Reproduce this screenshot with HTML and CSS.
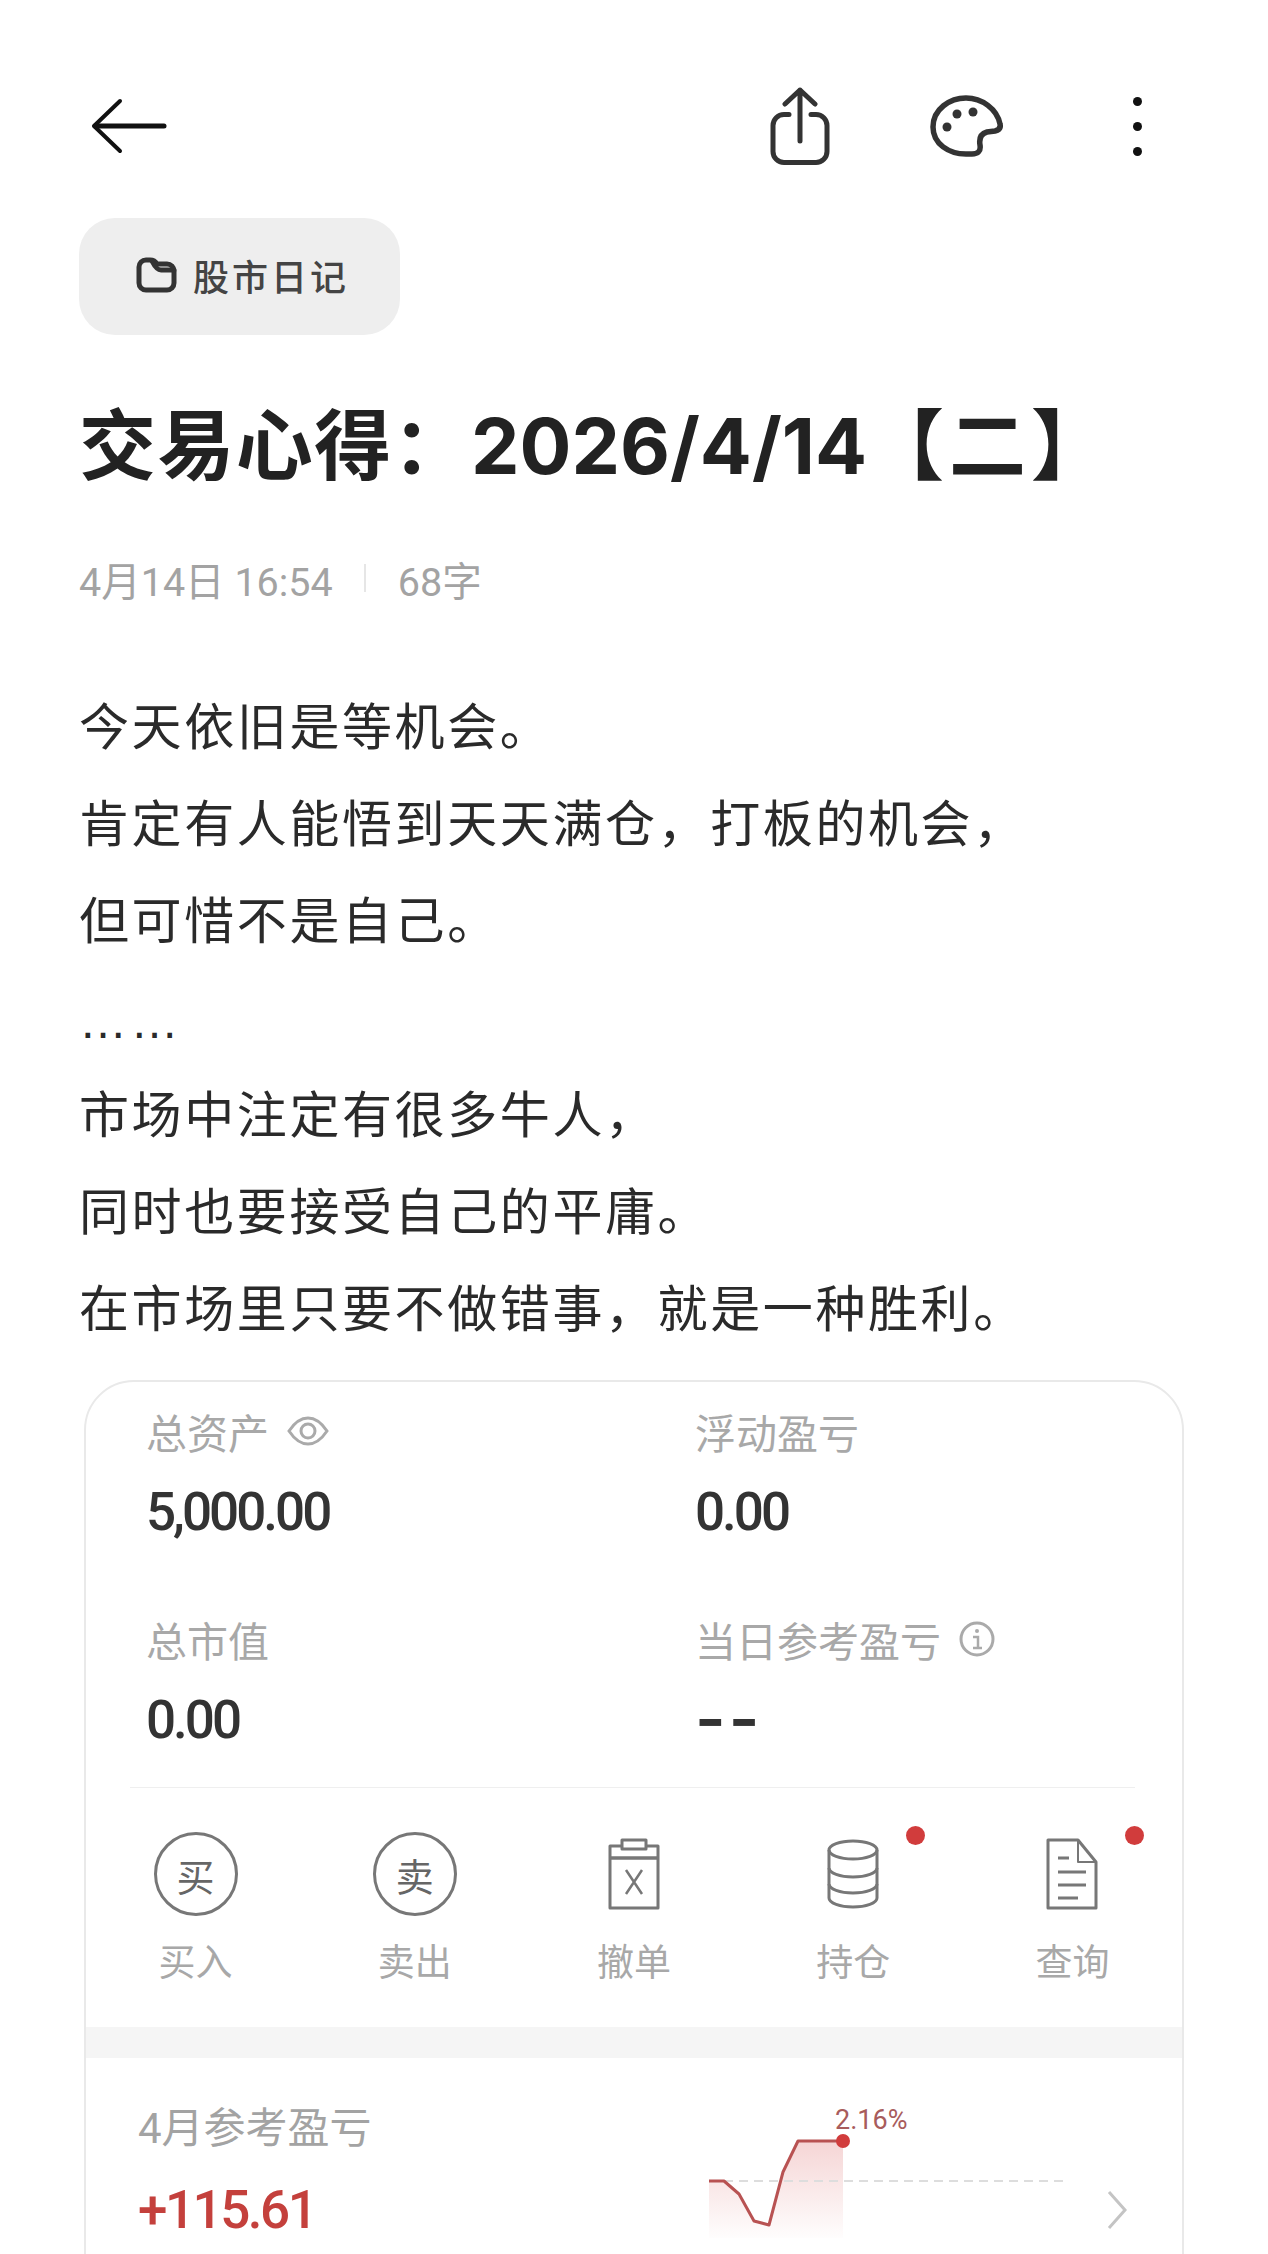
FILE: index.html
```html
<!DOCTYPE html>
<html lang="zh-CN">
  <head>
    <meta charset="UTF-8" />
    <meta name="viewport" content="width=device-width, initial-scale=1.0" />
    <title>交易心得</title>
    <link rel="stylesheet" href="styles.css">
  </head>
  <body>
    <div class="page">
      <div class="topbar">
        <svg class="icon-back" width="80" height="56" viewBox="0 0 80 56" fill="none" stroke="#111" stroke-linecap="round" stroke-linejoin="round">
          <path d="M29 3L3 28L29 53" stroke-width="4" />
          <path d="M4 28H73" stroke-width="5" />
        </svg>
        <svg class="icon-share" width="60" height="78" viewBox="0 0 60 78" fill="none" stroke="#333" stroke-width="5" stroke-linecap="round" stroke-linejoin="round">
          <path d="M19 27.500H14a11 11 0 0 0-11 11v26a11 11 0 0 0 11 11h32a11 11 0 0 0 11-11v-26a11 11 0 0 0-11-11h-5" />
          <path d="M30 3V54M15 17L30 3L45 17" />
        </svg>
        <svg class="icon-palette" width="73" height="62" viewBox="0 0 73 62" fill="none" stroke="#333" stroke-width="5.500">
          <path d="M36 3C20 3 3 14 3 32C3 49 19 59 36 59H42C48 59 51 56 50 50C49 44 50 39 57 37L65 36C69 35 71 33 70 29C67 14 52 3 36 3Z" />
          <g fill="#333" stroke="none">
            <circle cx="27" cy="19" r="4.500" />
            <circle cx="43" cy="17" r="4.500" />
            <circle cx="17" cy="32" r="4.500" />
          </g>
        </svg>
        <div class="more-dots">
          <span></span>
          <span></span>
          <span></span>
        </div>
      </div>

      <div class="chip">
        <svg width="41" height="36" viewBox="0 0 41 36" fill="none" stroke="#333" stroke-width="5" stroke-linejoin="round" stroke-linecap="round">
          <path d="M3 10a7 7 0 0 1 7-7h4a8 8 0 0 1 7 4h10a7 7 0 0 1 7 7v12a7 7 0 0 1-7 7H10a7 7 0 0 1-7-7Z" />
          <path d="M16 4c2 4 5 9 9 9h13" />
        </svg>
        <span>股市日记</span>
      </div>

      <h1 class="title">交易心得：<span class="title-num">2026/4/14</span><span class="title-end">【二】</span></h1>

      <div class="meta">
        <span>4月14日 16:54</span>
        <i class="meta-sep"></i>
        <span>68字</span>
      </div>

      <div class="content">
        <p>今天依旧是等机会。</p>
        <p>肯定有人能悟到天天满仓，打板的机会，</p>
        <p>但可惜不是自己。</p>
        <p class="ellipsis">……</p>
        <p>市场中注定有很多牛人，</p>
        <p>同时也要接受自己的平庸。</p>
        <p>在市场里只要不做错事，就是一种胜利。</p>
      </div>

      <div class="card">
        <div class="stats">
          <div class="stat">
            <div class="stat-label">
              总资产
              <svg width="42" height="30" viewBox="0 0 42 30" fill="none" stroke="#aaa" stroke-width="3">
                <path d="M2 15C8 6 14 2 21 2C28 2 34 6 40 15C34 24 28 28 21 28C14 28 8 24 2 15Z" />
                <circle cx="21" cy="15" r="7" />
              </svg>
            </div>
            <div class="stat-value">5,000.00</div>
          </div>
          <div class="stat">
            <div class="stat-label">浮动盈亏</div>
            <div class="stat-value">0.00</div>
          </div>
          <div class="stat">
            <div class="stat-label">总市值</div>
            <div class="stat-value">0.00</div>
          </div>
          <div class="stat">
            <div class="stat-label">
              当日参考盈亏
              <svg width="36" height="36" viewBox="0 0 36 36" fill="none" stroke="#aaa" stroke-width="3">
                <circle cx="18" cy="18" r="16" />
                <path d="M14 16H19V27M14 27H23" stroke-width="2.500" />
                <circle cx="18" cy="10" r="2" fill="#aaa" stroke="none" />
              </svg>
            </div>
            <div class="stat-value dash">--</div>
          </div>
        </div>

        <div class="divider"></div>

        <div class="actions">
          <div class="action">
            <div class="action-icon"><div class="round-icon">买</div></div>
            <div class="action-label">买入</div>
          </div>
          <div class="action">
            <div class="action-icon"><div class="round-icon">卖</div></div>
            <div class="action-label">卖出</div>
          </div>
          <div class="action">
            <div class="action-icon">
              <svg width="54" height="72" viewBox="0 0 54 72" fill="none" stroke="#777" stroke-width="3" stroke-linejoin="round">
                <path d="M15 8H3V70H51V8H39" />
                <path d="M15 2H39V11H15Z" />
                <path d="M3 20H51" stroke-width="3.500" />
                <path d="M19 32L35 56M35 32L19 56" stroke-width="2.500" />
              </svg>
            </div>
            <div class="action-label">撤单</div>
          </div>
          <div class="action">
            <div class="action-icon">
              <svg width="54" height="72" viewBox="0 0 54 72" fill="none" stroke="#777" stroke-width="3">
                <ellipse cx="27" cy="12" rx="24" ry="9" />
                <path d="M3 12V60C3 65 14 69 27 69C40 69 51 65 51 60V12" />
                <path d="M3 30C3 35 14 39 27 39C40 39 51 35 51 30" />
                <path d="M3 46C3 51 14 55 27 55C40 55 51 51 51 46" />
              </svg>
              <span class="badge"></span>
            </div>
            <div class="action-label">持仓</div>
          </div>
          <div class="action">
            <div class="action-icon">
              <svg width="54" height="72" viewBox="0 0 54 72" fill="none" stroke="#777" stroke-width="3" stroke-linejoin="round">
                <path d="M3 2H33L51 24V70H3Z" />
                <path d="M33 2V24H51" stroke-width="2" />
                <path d="M13 20H24M13 34H41M13 47H41M13 60H33" />
              </svg>
              <span class="badge"></span>
            </div>
            <div class="action-label">查询</div>
          </div>
        </div>

        <div class="band"></div>

        <div class="month">
          <div class="month-text">
            <div class="month-label">4月参考盈亏</div>
            <div class="month-value">+115.61</div>
          </div>
          <svg class="month-chart" width="370" height="150" viewBox="0 0 370 150" fill="none">
            <defs>
              <linearGradient id="areaFill" x1="0" y1="0" x2="0" y2="1">
                <stop offset="0" stop-color="#d65050" stop-opacity="0.24" />
                <stop offset="1" stop-color="#d65050" stop-opacity="0.01" />
              </linearGradient>
            </defs>
            <path d="M0 81H15L30 94L45 121L60 125L74 72L89 41H134V138H0Z" fill="url(#areaFill)" />
            <path d="M0 81H358" stroke="#ddd" stroke-width="2" stroke-dasharray="9 6" />
            <path d="M0 81H15L30 94L45 121L60 125L74 72L89 41H134" stroke="#b85252" stroke-width="3" stroke-linejoin="round" />
            <circle cx="134" cy="41" r="7" fill="#d13c3c" />
            <text class="chart-text" x="126" y="29">2.16%</text>
          </svg>
          <svg class="month-arrow" width="20" height="40" viewBox="0 0 20 40" fill="none" stroke="#c4c4c4" stroke-width="3">
            <path d="M2 2L18 20L2 38" />
          </svg>
        </div>
      </div>
    </div>
  </body>
</html>
```

FILE: styles.css
```css
* {
  box-sizing: border-box;
}

html,
body {
  margin: 0;
  background: #fff;
}

.page {
  height: 2254px;
  padding: 80px 80px 0 79px;
  overflow: hidden;
  font-family: "Noto Sans CJK SC", "Noto Sans", sans-serif;
  color: #2a2a2a;
}

/* top bar */
.topbar {
  display: flex;
  align-items: center;
  height: 92px;
  padding: 0 46px 0 12px;
}

.icon-share {
  margin-left: auto;
}

.icon-palette {
  margin-left: 100px;
}

.more-dots {
  display: flex;
  flex-direction: column;
  gap: 16px;
  margin-left: 130px;
}

.more-dots span {
  width: 9px;
  height: 9px;
  border-radius: 50%;
  background: #111;
}

/* folder chip */
.chip {
  display: flex;
  align-items: center;
  gap: 16px;
  width: 321px;
  height: 117px;
  margin-top: 46px;
  padding: 0 0 4px 57px;
  border-radius: 36px;
  background: #eee;
  font-size: 36px;
  font-weight: 500;
  letter-spacing: 3px;
  color: #444;
}

.title {
  margin: 56px 0 0;
  font-size: 77px;
  line-height: 100px;
  font-weight: 700;
  letter-spacing: 1.400px;
  color: #222;
  white-space: nowrap;
}

.title-num {
  font-family: "Inter", sans-serif;
  letter-spacing: 0;
}

.title-end {
  letter-spacing: 5px;
}

.meta {
  display: flex;
  align-items: center;
  margin-top: 57px;
  height: 50px;
  font-family: "Roboto", "Noto Sans CJK SC", sans-serif;
  font-size: 39.500px;
  color: #a3a3a3;
}

.meta-sep {
  width: 2px;
  height: 28px;
  margin: 0 32px 0 31px;
  background: #e6e6e6;
}

.content {
  margin-top: 72px;
  font-size: 50px;
  line-height: 97px;
  letter-spacing: 2.600px;
  color: #2a2a2a;
}

.content p {
  margin: 0;
  white-space: nowrap;
}

.content .ellipsis {
  height: 97px;
  padding-top: 7px;
  font-family: "Liberation Sans", sans-serif;
  font-size: 48px;
  letter-spacing: 3.500px;
}

/* account card */
.card {
  width: 1100px;
  height: 1000px;
  margin: 26px 0 0 5px;
  border: 2px solid #e9e9e9;
  border-radius: 50px;
}

.stats {
  display: grid;
  grid-template-columns: 549px 1fr;
  row-gap: 72px;
  padding: 24px 0 0 60px;
}

.stat-label {
  display: flex;
  align-items: center;
  gap: 18px;
  height: 50px;
  font-size: 41px;
  color: #a8a8a8;
}

.stat-value {
  margin-top: 26px;
  font-family: "Roboto", sans-serif;
  font-size: 53px;
  line-height: 60px;
  font-weight: 500;
  letter-spacing: -3px;
  color: #333;
}

.stat-value.dash {
  height: 60px;
  font-family: "Inter", sans-serif;
  font-size: 66px;
  line-height: 56px;
  font-weight: 600;
  letter-spacing: 3px;
}

.divider {
  height: 1px;
  margin: 37px 47px 0 44px;
  background: #efefef;
}

.actions {
  display: grid;
  grid-template-columns: repeat(5, 1fr);
  padding: 44px 0 42px;
}

.action {
  display: flex;
  flex-direction: column;
  align-items: center;
}

.action-icon {
  position: relative;
  display: flex;
  align-items: center;
  justify-content: center;
  height: 84px;
}

.round-icon {
  display: flex;
  align-items: center;
  justify-content: center;
  width: 84px;
  height: 84px;
  border: 3px solid #777;
  border-radius: 50%;
  font-size: 38px;
  color: #666;
}

.badge {
  position: absolute;
  top: -6px;
  left: 80px;
  width: 19px;
  height: 19px;
  border-radius: 50%;
  background: #d13c3c;
}

.action-label {
  margin-top: 19px;
  font-size: 37px;
  line-height: 50px;
  color: #a8a8a8;
}

.band {
  height: 31px;
  background: #f5f5f5;
}

/* month profit row */
.month {
  display: flex;
  align-items: flex-start;
  padding-left: 52px;
}

.month-text {
  width: 571px;
  padding-top: 46px;
}

.month-label {
  font-family: "Roboto", "Noto Sans CJK SC", sans-serif;
  font-size: 42px;
  line-height: 50px;
  color: #a3a3a3;
}

.month-value {
  margin-top: 26px;
  font-family: "Roboto", sans-serif;
  font-size: 53px;
  line-height: 60px;
  font-weight: 500;
  letter-spacing: -2.500px;
  color: #c4403c;
}

.month-chart {
  margin-top: 42px;
}

.chart-text {
  font-family: "Roboto", sans-serif;
  font-size: 27px;
  fill: #a85c5c;
}

.month-arrow {
  margin: 132px 0 0 28px;
}
```
